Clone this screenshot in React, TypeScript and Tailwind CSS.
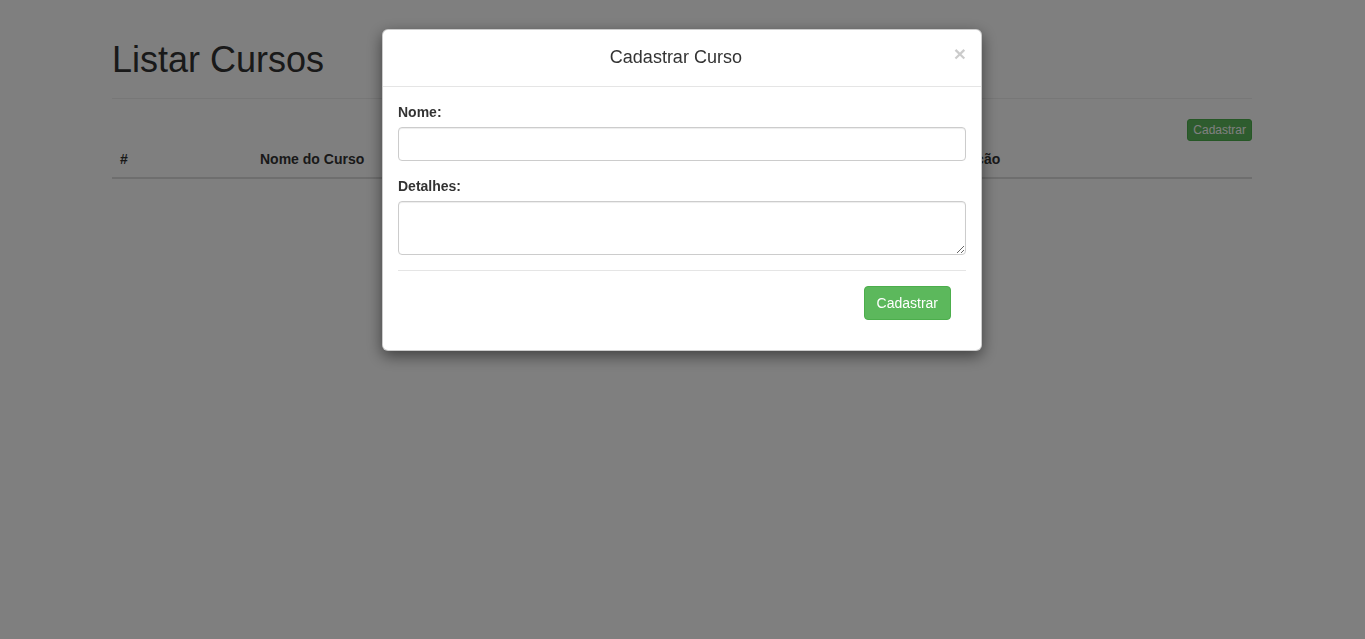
import React from "react";

export default function App() {
  return (
    <div className="relative h-[639px] overflow-hidden bg-white font-['Liberation_Sans',Arial,sans-serif] text-[14px] leading-[20px] text-[#333]">
      {/* Page */}
      <div className="pt-[40px] pr-[1px]">
        <div className="mx-auto w-[1170px] px-[15px]">
          <div className="mb-[20px] pb-[9px] border-b border-[#eee]">
            <h1 className="text-[36px] leading-[39px] font-normal mb-[10px]">Listar Cursos</h1>
          </div>
          <div className="flex justify-end">
            <button className="h-[22px] px-[5px] text-[12px] leading-[18px] rounded-[3px] bg-[#5cb85c] border border-[#4cae4c] text-white">
              Cadastrar
            </button>
          </div>
          <table className="w-full table-fixed border-collapse">
            <thead>
              <tr className="border-b-2 border-[#ddd]">
                <th className="w-[140px] p-[8px] text-left font-bold">#</th>
                <th className="w-[300px] p-[8px] text-left font-bold">Nome do Curso</th>
                <th className="w-[406px] p-[8px] text-left font-bold">Detalhes</th>
                <th className="p-[8px] text-left font-bold">Ação</th>
              </tr>
            </thead>
          </table>
        </div>
      </div>

      {/* Backdrop */}
      <div className="fixed inset-0 bg-black/50" />

      {/* Modal */}
      <div className="fixed inset-0 flex justify-center pt-[29px] pr-[1px]">
        <div className="w-[600px] self-start bg-white border border-black/20 rounded-[6px] shadow-[0_5px_15px_rgba(0,0,0,0.5)]">
          <div className="flex items-start p-[15px] border-b border-[#e5e5e5]">
            <h4 className="flex-1 text-center text-[18px] leading-[25.7px] font-normal text-[#333]">Cadastrar Curso</h4>
            <button className="mt-[-2px] text-[21px] leading-[21px] font-bold text-black opacity-20">×</button>
          </div>
          <div className="p-[15px]">
            <div className="mb-[15px]">
              <label className="block mb-[5px] font-bold">Nome:</label>
              <input className="block w-full h-[34px] px-[12px] py-[6px] border border-[#ccc] rounded-[4px] shadow-[inset_0_1px_1px_rgba(0,0,0,0.075)] bg-white outline-none" />
            </div>
            <div className="mb-[15px]">
              <label className="block mb-[5px] font-bold">Detalhes:</label>
              <textarea rows={2} className="block w-full h-[54px] px-[12px] py-[6px] border border-[#ccc] rounded-[4px] shadow-[inset_0_1px_1px_rgba(0,0,0,0.075)] bg-white outline-none" />
            </div>
            <div className="flex justify-end p-[15px] border-t border-[#e5e5e5]">
              <button className="h-[34px] px-[12px] rounded-[4px] bg-[#5cb85c] border border-[#4cae4c] text-white text-[14px]">
                Cadastrar
              </button>
            </div>
          </div>
        </div>
      </div>
    </div>
  );
}
